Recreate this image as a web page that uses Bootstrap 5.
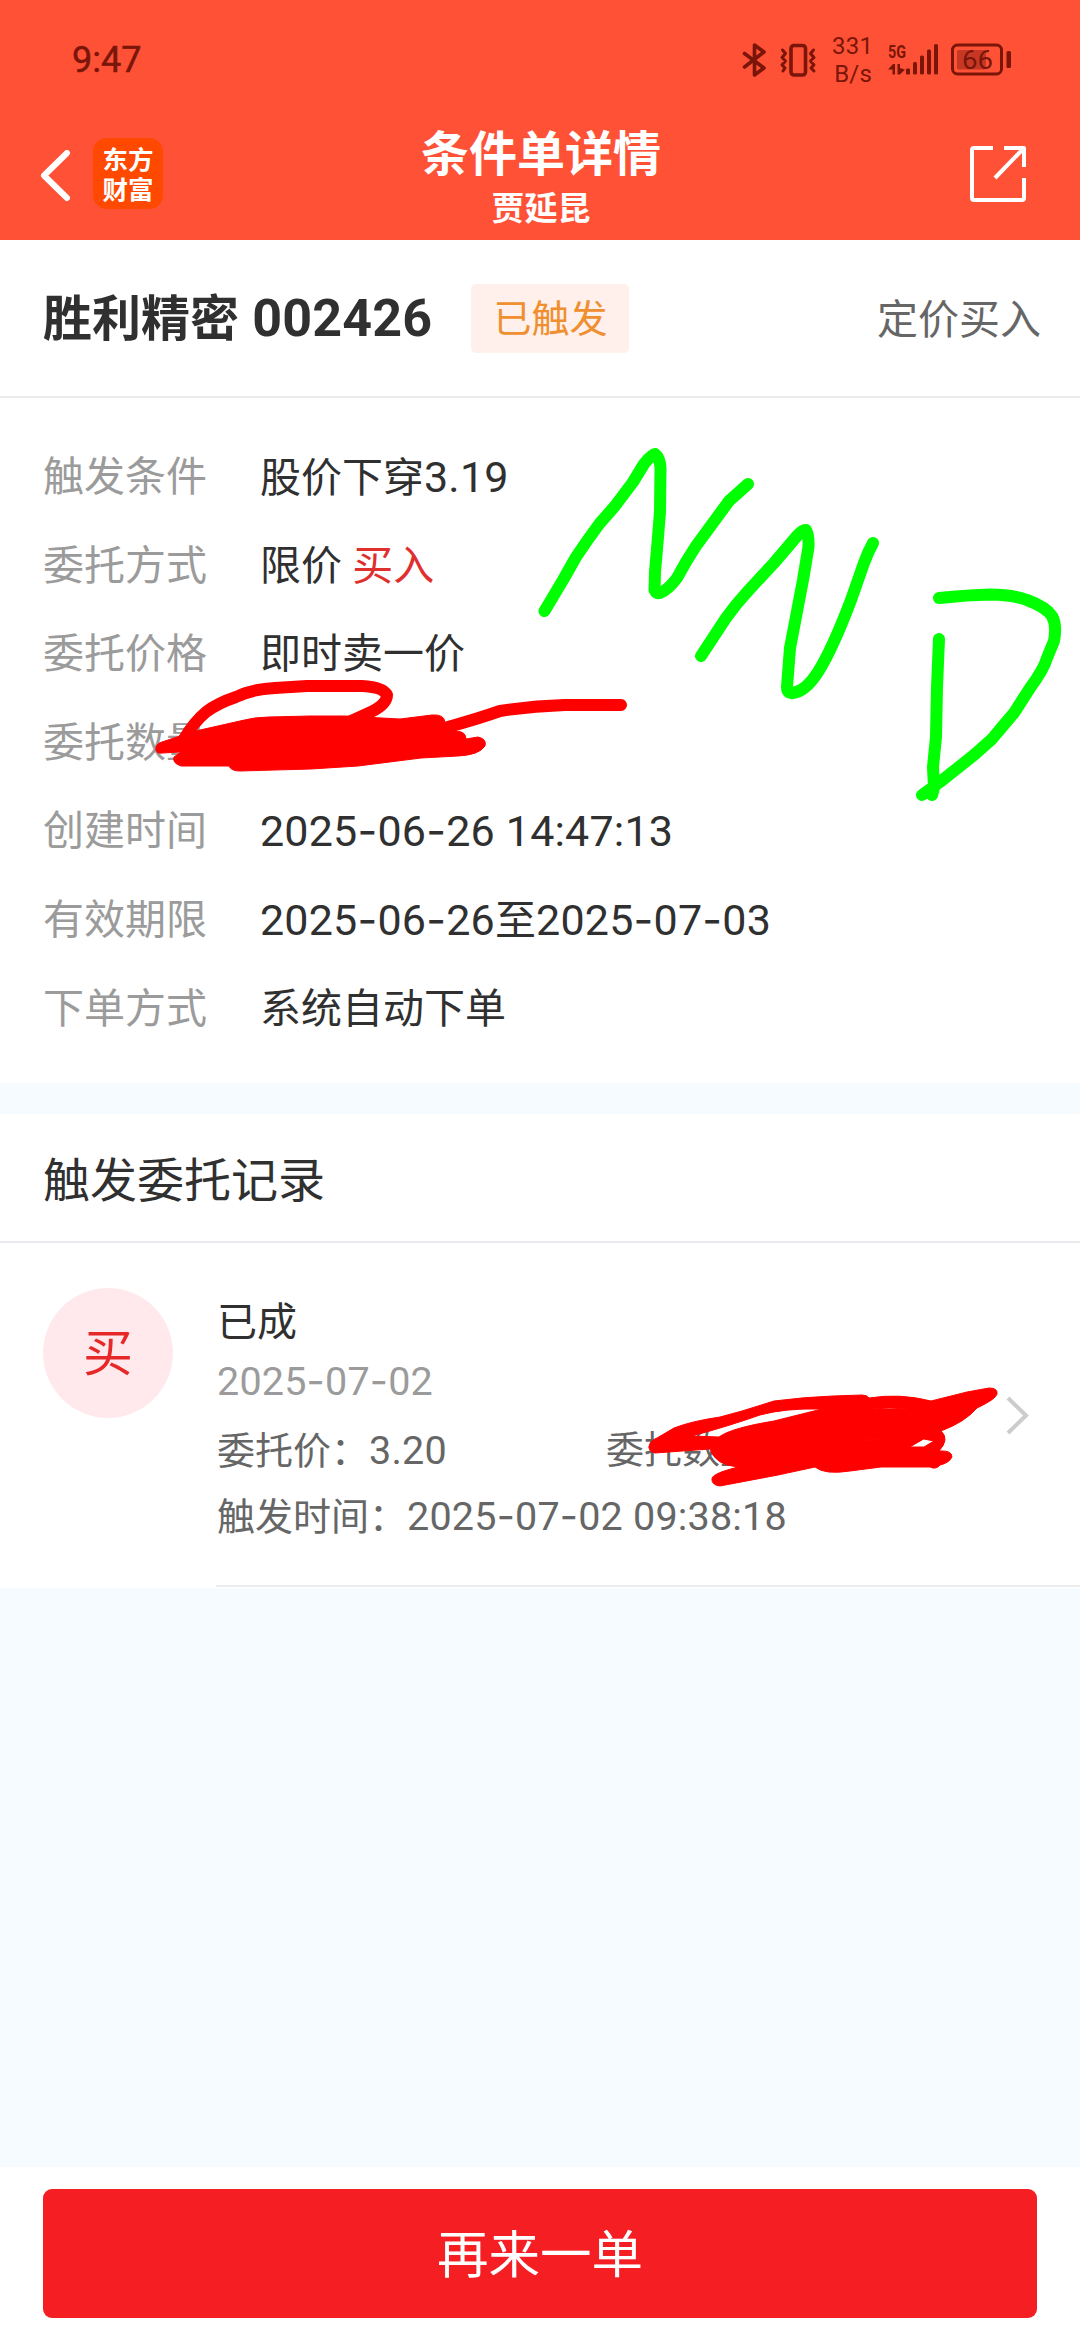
<!DOCTYPE html>
<html lang="zh-CN">
<head>
<meta charset="utf-8">
<meta name="viewport" content="width=device-width, initial-scale=1">
<title>条件单详情</title>
<link href="https://cdn.jsdelivr.net/npm/bootstrap@5.3.0/dist/css/bootstrap.min.css" rel="stylesheet">
<style>
  body { font-family: Roboto, "Noto Sans CJK SC", sans-serif; color: #303030; background: #f5fbff; width: 1080px; height: 2340px; overflow: hidden; }
  .screen { width: 1080px; height: 2340px; }
  .dash { font-family: Inter, sans-serif; }
  .topbar { background: #ff5136; height: 240px; }
  .statusbar { height: 118px; padding: 2px 66px 0 72px; color: #7a1509; }
  .clock { font-size: 36px; line-height: 40px; font-weight: 400; -webkit-text-stroke: .5px; }
  .speed { font-size: 24px; line-height: 28px; letter-spacing: .2px; width: 40px; margin-left: 15px; }
  .titlebar { height: 122px; padding: 0 54px 0 39px; }
  .side { width: 200px; }
  .side-end { width: 183px; }
  .app-logo { width: 70px; height: 71px; border-radius: 14px; background: #ff4800; font-size: 25.5px; line-height: 30px; font-weight: 700; margin-left: 22px; padding-top: 7px; }
  .page-title { font-size: 48px; line-height: 58px; padding-top: 8px; }
  .page-sub { font-size: 33px; line-height: 40px; padding-top: 5px; }
  .stock-row { height: 158px; padding: 0 39px 0 43px; border-bottom: 2px solid #ececee; }
  .stock-name { font-size: 49px; line-height: 60px; padding-top: 2px; }
  .stock-code { font-size: 52px; letter-spacing: .2px; margin-left: 1px; }
  .state-tag { width: 158px; height: 69px; border-radius: 5px; background: #fff0ec; color: #ef8f30; font-size: 38px; line-height: 71px; font-weight: 400; margin-left: 39px; padding: 0; }
  .kind { font-size: 41px; color: #666; padding-top: 5px; }
  .details { padding: 35px 43px 30px; height: 685px; }
  .detail { height: 88.6px; font-size: 41px; line-height: 88px; }
  .detail dt { width: 217px; font-weight: 400; color: #9b9b9b; }
  .num { font-size: 43px; letter-spacing: .2px; }
  dd.num { margin-top: -1px; }
  .num .zh { font-size: 41px; }
  .buy { color: #e02f2f; }
  .log-head { margin-top: 31px; height: 129px; padding: 4px 43px 0; font-size: 47px; line-height: 126px; border-bottom: 2px solid #e9ebf1; }
  .log-item { height: 345px; padding-left: 43px; }
  .side-mark { width: 130px; height: 130px; margin-top: 45px; background: #ffe9ed; color: #e72828; font-size: 50px; line-height: 132px; }
  .log-body { width: 864px; margin-left: 43px; border-bottom: 2px solid #ececec; padding: 46px 0 0 1px; height: 344px; color: #666; font-size: 38px; line-height: 65px; }
  .log-body .num { font-size: 39.5px; letter-spacing: .2px; }
  .done { font-size: 40px; line-height: 68px; color: #303030; }
  .day { line-height: 48px; color: #9b9b9b; margin-bottom: 12px; }
  .qty-cell { width: 400px; }
  .price-cell { width: 389px; }
  .bottom-bar { height: 173px; padding: 22px 43px; }
  .again { height: 129px; background: #f41e23; border-radius: 9px; font-size: 51.5px; color: #fff; line-height: 133px; }
  .ink { left: 0; top: 0; z-index: 5; pointer-events: none; }
  .go { left: 790px; top: 152px; }
</style>
<script src="https://cdn.jsdelivr.net/npm/bootstrap@5.3.0/dist/js/bootstrap.bundle.min.js"></script>
</head>
<body>
<div class="screen position-relative d-flex flex-column">
  <header class="topbar text-white">
    <div class="statusbar d-flex align-items-center justify-content-between">
      <span class="clock">9:47</span>
      <div class="d-flex align-items-center">
        <svg width="76" height="36" viewBox="0 0 76 36" fill="none" stroke="#7a1509" stroke-width="3.6" stroke-linejoin="round" stroke-linecap="round">
          <path d="M3.500 11.500L23 26L13.500 33V3L23 10L3.500 25"/>
          <rect x="50" y="3.500" width="14.500" height="29.500" rx="3"/>
          <path d="M41.500 8l3 3.500-3.500 4 3.500 3.500-3.500 4 3 3-2 3M72.500 8l-3 3.500 3.500 4-3.500 3.500 3.500 4-3 3 3 3" stroke-width="3"/>
        </svg>
        <div class="speed text-end">331<br>B/s</div>
        <svg width="126" height="40" viewBox="0 0 126 40" fill="#7a1509" class="ms-3">
          <text x="0" y="18" font-family="Roboto, sans-serif" font-size="18" font-weight="700" textLength="18" lengthAdjust="spacingAndGlyphs">5G</text>
          <path d="M0 29.500L5 24H7V34.500H4.500V29.500ZM9.500 24H12V28L17 29.500L12 34.500H9.500Z"/>
          <rect x="18" y="28.500" width="4" height="6" rx="1"/><rect x="25" y="22" width="4" height="12.500" rx="1.500"/><rect x="32" y="15.500" width="4" height="19" rx="1.500"/><rect x="39" y="9.500" width="4" height="25" rx="1.500"/><rect x="46" y="4" width="4" height="30.500" rx="1.500"/>
          <rect x="64.500" y="5" width="49" height="29" rx="5" fill="none" stroke="#7a1509" stroke-width="3"/>
          <rect x="69" y="10" width="29" height="19.500" rx="2" fill="#c73824"/>
          <rect x="118.500" y="11" width="4.500" height="17" rx="1.500"/>
          <text x="74" y="28.500" font-family="Roboto, sans-serif" font-size="26" textLength="31" lengthAdjust="spacingAndGlyphs">66</text>
        </svg>
      </div>
    </div>
    <div class="titlebar d-flex justify-content-between">
      <div class="side d-flex pt-3">
        <svg width="32" height="56" viewBox="0 0 32 56" fill="none" stroke="#fff" stroke-width="6" stroke-linejoin="round" stroke-linecap="round" class="mt-3"><path d="M28 3L5 25.500L28 48"/></svg>
        <div class="app-logo text-center mt-1">东方<br>财富</div>
      </div>
      <div class="text-center fw-bold">
        <div class="page-title">条件单详情</div>
        <div class="page-sub">贾延昆</div>
      </div>
      <div class="side-end d-flex justify-content-end pt-4">
        <svg width="60" height="60" viewBox="0 0 60 60" fill="none" stroke="#fff" stroke-width="4" stroke-linejoin="round"><path d="M27 6H8Q6 6 6 8V56Q6 58 8 58H56Q58 58 58 56V36M38 6H58V25M57 7L29 36" /></svg>
      </div>
    </div>
  </header>

  <section class="bg-white">
    <div class="stock-row d-flex align-items-center">
      <div class="stock-name fw-bold">胜利精密 <span class="stock-code">002426</span></div>
      <span class="badge state-tag">已触发</span>
      <span class="kind ms-auto">定价买入</span>
    </div>
    <dl class="details mb-0">
      <div class="detail d-flex"><dt>触发条件</dt><dd class="mb-0">股价下穿<span class="num">3.19</span></dd></div>
      <div class="detail d-flex"><dt>委托方式</dt><dd class="mb-0">限价 <span class="buy">买入</span></dd></div>
      <div class="detail d-flex"><dt>委托价格</dt><dd class="mb-0">即时卖一价</dd></div>
      <div class="detail d-flex"><dt>委托数量</dt><dd class="mb-0"></dd></div>
      <div class="detail d-flex"><dt>创建时间</dt><dd class="mb-0 num">2025<span class="dash">-</span>06<span class="dash">-</span>26 14:47:13</dd></div>
      <div class="detail d-flex"><dt>有效期限</dt><dd class="mb-0 num">2025<span class="dash">-</span>06<span class="dash">-</span>26<span class="zh">至</span>2025<span class="dash">-</span>07<span class="dash">-</span>03</dd></div>
      <div class="detail d-flex"><dt>下单方式</dt><dd class="mb-0">系统自动下单</dd></div>
    </dl>
  </section>

  <section>
    <div class="log-head bg-white">触发委托记录</div>
    <div class="log-item bg-white d-flex">
      <div class="side-mark rounded-circle text-center flex-shrink-0">买</div>
      <div class="log-body position-relative">
        <div class="done">已成</div>
        <div class="day num">2025<span class="dash">-</span>07<span class="dash">-</span>02</div>
        <div class="d-flex"><div class="price-cell">委托价：<span class="num">3.20</span></div><div class="qty-cell">委托数量：</div></div>
        <div>触发时间：<span class="num">2025<span class="dash">-</span>07<span class="dash">-</span>02 09:38:18</span></div>
        <svg class="go position-absolute" width="24" height="40" viewBox="0 0 24 40" fill="none" stroke="#ccc" stroke-width="4"><path d="M2 3L20 20.500L2 38"/></svg>
      </div>
    </div>
  </section>

  <footer class="bottom-bar bg-white mt-auto">
    <button type="button" class="btn again w-100 border-0 p-0">再来一单</button>
  </footer>

  <svg class="ink position-absolute" width="1080" height="2340" viewBox="0 0 1080 2340" fill="none" stroke-width="12" stroke-linecap="round" stroke-linejoin="round">
    <g stroke="#0f0">
      <path d="M544.500 611L563 580L576 557Q588 539 600 523L615 506L633 482L644 464Q652 454 655 454Q660 458 660.500 468L660 512L658 537L655 572L654.500 590Q656 594 660 593Q668 590 677 578Q686 561 696 546L729 501L748 484"/>
      <path d="M701 656L726 618Q736 604 748 591L774 563L797 536Q803 529 806 530Q809 534 808.500 547L803 580L795 622L790 648L787 687Q787 694 793 693Q806 691 818 672Q832 650 851 600L864 563Q868 552 873 543"/>
      <path d="M939 639L937 687L936 737L933 767L934 788L932 795M939 598Q968 595 990 594.500Q1015 595 1027 600Q1046 607 1052 616Q1057 625 1054 641L1047 658Q1044 669 1030 688L1014 713L1002 727L992 739L974 755L940 782L922 795"/>
    </g>
    <g stroke="#f00">
      <path d="M184 739Q194 722 206 712Q218 703 236 697Q252 689 275 688L307 686H362Q383 687 387 695Q387 704 371 712L349 722M448 727Q477 719 500 711Q532 706 565 705H621"/>
      <g fill="#f00" stroke-width="1">
        <path d="M156 750Q155 744 162 742L177 737L200 730L240 721Q255 717 269 717L310 716H345L400 719L432 715Q444 714 445 722L455 731Q466 731 466 739L478 737Q487 739 485 746Q479 755 458 756L421 758L358 766L311 769L240 771Q231 771 229 766H181Q172 763 174 757L181 752L162 753Q157 754 156 750Z"/>
        <path fill-rule="evenodd" d="M649 1447Q649 1441 657 1438L674 1428Q692 1421 720 1417L742 1411L774 1401Q805 1397 833 1396L862 1395Q867 1395 869 1398Q900 1393 931 1401L967 1392L989 1388Q998 1388 997 1394Q996 1399 977 1408Q965 1422 941 1431Q950 1439 939 1451Q952 1450 952 1457Q949 1463 940 1465Q936 1470 930 1467H881L850 1471Q825 1475 815 1467L778 1475L720 1486Q711 1485 712 1478Q714 1473 738 1467Q715 1465 710 1449L655 1453Q649 1452 649 1447ZM692 1436L719 1437Q731 1428 774 1421L822 1409Q785 1408 760 1415Q729 1426 692 1436ZM872 1409H907Q890 1407 872 1409ZM860 1442L886 1437L868 1440ZM910 1447H924L934 1441L924 1439Z"/>
      </g>
    </g>
  </svg>
</div>
</body>
</html>
